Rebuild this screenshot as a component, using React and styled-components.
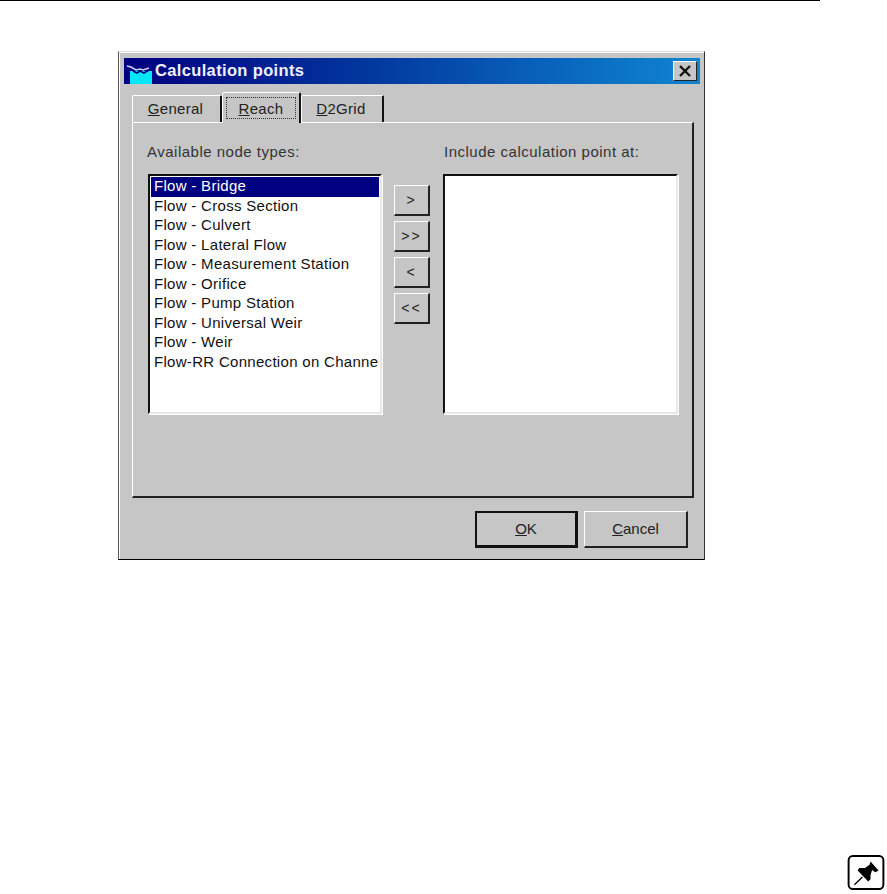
import React from "react";
import styled, { createGlobalStyle } from "styled-components";

const Global = createGlobalStyle`
  html, body { margin: 0; padding: 0; background: #fff; }
  body { font-family: "Liberation Sans", Arial, sans-serif; color: #000; }
  #root { width: 887px; height: 894px; overflow: hidden; }
`;

const Page = styled.div`
  width: 887px;
  height: 894px;
  display: flex;
  flex-direction: column;
`;
const TopRule = styled.div`
  width: 820px;
  height: 1px;
  background: #000;
  flex: none;
`;
const Dialog = styled.div`
  box-sizing: border-box;
  width: 587px;
  height: 509px;
  margin: 50px 0 0 118px;
  flex: none;
  background: #c6c6c6;
  border-style: solid;
  border-width: 1px;
  border-color: #e0e0e0 #333 #000 #555;
  box-shadow: inset 1px 1px 0 #fff;
  padding: 6px 4px 0 5px;
  display: flex;
  flex-direction: column;
`;
const TitleBar = styled.div`
  height: 26px;
  flex: none;
  background: linear-gradient(90deg, #000080 0%, #02349c 40%, #0a6cc0 80%, #1084d0 100%);
  display: flex;
  align-items: center;
  padding: 0 3px 0 2px;
  gap: 3px;
`;
const TitleIcon = styled.svg`
  width: 26px;
  height: 21px;
  flex: none;
  margin-top: 4px;
`;
const TitleText = styled.div`
  flex: 1;
  color: #f0f0ff;
  font-weight: 700;
  font-size: 16.5px;
  letter-spacing: 0.35px;
  white-space: nowrap;
  padding-bottom: 2px;
`;
const CloseBox = styled.div`
  box-sizing: border-box;
  width: 24px;
  height: 20px;
  background: #c6c6c6;
  border-style: solid;
  border-width: 1px;
  border-color: #fff #222 #222 #fff;
  display: flex;
  align-items: center;
  justify-content: center;
`;
const TabRow = styled.div`
  display: flex;
  align-items: flex-end;
  height: 30px;
  margin: 8px 0 0 8px;
  flex: none;
  position: relative;
  z-index: 1;
`;
const Tab = styled.div`
  box-sizing: border-box;
  height: ${(p) => (p.$active ? "31px" : "27px")};
  width: ${(p) => p.$w}px;
  margin-bottom: ${(p) => (p.$active ? "-1px" : "0")};
  background: #c6c6c6;
  border-style: solid;
  border-width: 1px 2px 0 1px;
  border-color: #fff #111 transparent #fff;
  border-radius: 2px 2px 0 0;
  font-size: 15px;
  color: #222;
  display: flex;
  align-items: center;
  justify-content: center;
  letter-spacing: 0.3px;
  padding: ${(p) => (p.$active ? "4px 3px" : "0 2px 2px 0")};
`;
const FocusRing = styled.span`
  box-sizing: border-box;
  width: 100%;
  height: 100%;
  border: 1px dotted #333;
  display: flex;
  align-items: center;
  justify-content: center;
`;
const Panel = styled.div`
  box-sizing: border-box;
  height: 376px;
  margin: 0 6px 0 8px;
  flex: none;
  border-style: solid;
  border-width: 1px 2px 2px 1px;
  border-color: #fff #222 #222 #fff;
  padding: 20px 14px 0 15px;
  display: grid;
  grid-template-columns: 234px 61px 235px;
  grid-template-rows: 31px 240px;
`;
const Label = styled.div`
  font-size: 15px;
  line-height: 17px;
  letter-spacing: 0.5px;
  color: #333;
  white-space: nowrap;
  margin-left: -1px;
`;
const RightLabel = styled(Label)`
  grid-column: 3;
  margin-left: 1px;
`;
const ListBox = styled.div`
  box-sizing: border-box;
  background: #fff;
  border-style: solid;
  border-width: 2px;
  border-color: #111 #e8e8e8 #e8e8e8 #111;
  box-shadow: 1px 1px 0 #fff;
  padding: 1px 1px 0 1px;
  overflow: hidden;
`;
const Row = styled.div`
  height: 19.5px;
  line-height: 17px;
  font-size: 15px;
  letter-spacing: 0.3px;
  padding-left: 3px;
  white-space: nowrap;
  overflow: hidden;
  color: ${(p) => (p.$selected ? "#fff" : "#111")};
  background: ${(p) => (p.$selected ? "#000080" : "transparent")};
`;
const MoveButtons = styled.div`
  padding: 11px 0 0 12px;
  display: flex;
  flex-direction: column;
  gap: 5px;
`;
const MoveButton = styled.div`
  box-sizing: border-box;
  width: 36px;
  height: 31px;
  background: #c6c6c6;
  border-style: solid;
  border-width: 1px 2px 2px 1px;
  border-color: #fff #222 #222 #fff;
  font-size: 14px;
  color: #222;
  display: flex;
  align-items: center;
  justify-content: center;
  letter-spacing: 2px;
`;
const Footer = styled.div`
  display: flex;
  justify-content: flex-end;
  gap: 6px;
  margin-top: 13px;
  padding-right: 12px;
`;
const PushButton = styled.div`
  box-sizing: border-box;
  width: ${(p) => p.$w}px;
  height: 37px;
  background: #c6c6c6;
  border-style: solid;
  border-width: ${(p) => (p.$default ? "2px 3px 3px 2px" : "1px 2px 2px 1px")};
  border-color: ${(p) => (p.$default ? "#111" : "#fff #222 #222 #fff")};
  font-size: 15px;
  color: #222;
  display: flex;
  align-items: center;
  justify-content: center;
  padding-bottom: 2px;
`;
const Key = styled.span`
  text-decoration: underline;
`;
const NoteIcon = styled.svg`
  width: 38px;
  height: 37px;
  margin: auto 2px 3px auto;
  flex: none;
`;

const items = [
  "Flow - Bridge",
  "Flow - Cross Section",
  "Flow - Culvert",
  "Flow - Lateral Flow",
  "Flow - Measurement Station",
  "Flow - Orifice",
  "Flow - Pump Station",
  "Flow - Universal Weir",
  "Flow - Weir",
  "Flow-RR Connection on Channel",
];

export default function App() {
  return (
    <Page>
      <Global />
      <TopRule />
      <Dialog>
        <TitleBar>
          <TitleIcon viewBox="0 0 26 21">
            <rect x="4" y="8" width="22" height="13" fill="#00e8f8" />
            <path d="M1 3 L5 4 L10 7 L14 6 L17 7 L23 5" fill="none" stroke="#c8d4f0" strokeWidth="1.5" />
            <path d="M7 8 L11 10 L14 8 L18 10 L23 7" fill="none" stroke="#000080" strokeWidth="1.6" />
          </TitleIcon>
          <TitleText>Calculation points</TitleText>
          <CloseBox>
            <svg width="14" height="12" viewBox="0 0 14 12">
              <path d="M2 1 L12 11 M12 1 L2 11" stroke="#111" strokeWidth="2.4" />
            </svg>
          </CloseBox>
        </TitleBar>
        <TabRow>
          <Tab $w={90}>
            <span><Key>G</Key>eneral</span>
          </Tab>
          <Tab $w={79} $active>
            <FocusRing><span><Key>R</Key>each</span></FocusRing>
          </Tab>
          <Tab $w={83}>
            <span><Key>D</Key>2Grid</span>
          </Tab>
        </TabRow>
        <Panel>
          <Label>Available node types:</Label>
          <RightLabel>Include calculation point at:</RightLabel>
          <ListBox>
            {items.map((t, i) => (
              <Row key={t} $selected={i === 0}>{t}</Row>
            ))}
          </ListBox>
          <MoveButtons>
            <MoveButton>&gt;</MoveButton>
            <MoveButton>&gt;&gt;</MoveButton>
            <MoveButton>&lt;</MoveButton>
            <MoveButton>&lt;&lt;</MoveButton>
          </MoveButtons>
          <ListBox />
        </Panel>
        <Footer>
          <PushButton $w={103} $default><span><Key>O</Key>K</span></PushButton>
          <PushButton $w={104}><span><Key>C</Key>ancel</span></PushButton>
        </Footer>
      </Dialog>
      <NoteIcon viewBox="22 28 118 112">
        <rect x="27" y="33" width="108" height="102" rx="13" fill="#fff" stroke="#000" strokeWidth="6" />
        <path d="M95 50 L120 78 L110 83 L100 76 L95 92 L95 105 L88 112 L55 78 L60 70 L78 70 L92 60 Z" fill="#000" />
        <path d="M70 98 L45 122" stroke="#000" strokeWidth="4" />
      </NoteIcon>
    </Page>
  );
}
